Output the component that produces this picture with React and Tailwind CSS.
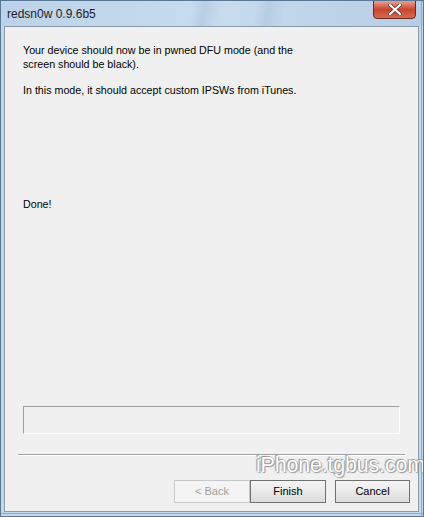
export default function App() {
  return (
    <div
      className="relative w-[424px] h-[517px] overflow-hidden bg-[#c4d8ec] border border-[#5a7896]"
      style={{ fontFamily: '"Liberation Sans", Arial, sans-serif' }}
    >
      {/* title bar */}
      <div className="relative h-[25px] flex items-center pl-[6px] bg-gradient-to-r from-[#bcd2e8] via-[#c9dcee] to-[#b7cde4]">
        <div className="absolute inset-0 bg-[linear-gradient(100deg,transparent_45%,rgba(150,180,210,0.35)_48%,transparent_52%,transparent_60%,rgba(150,180,210,0.3)_63%,transparent_67%)]" />
        <span className="relative text-[12px] text-[#1c1c2c]">redsn0w 0.9.6b5</span>
        <div className="absolute right-[7px] top-[-1px] w-[43px] h-[19px] rounded-b-[4px] border border-[#6a2a20] bg-gradient-to-b from-[#e8a090] via-[#c8452e] to-[#d46a50] flex items-center justify-center">
          <svg width="14" height="11" viewBox="0 0 14 11">
            <path d="M2 1 L12 10 M12 1 L2 10" stroke="#5a2a22" strokeWidth="3.6" strokeLinecap="square" />
            <path d="M2 1 L12 10 M12 1 L2 10" stroke="#ffffff" strokeWidth="2.2" strokeLinecap="square" />
          </svg>
        </div>
      </div>

      {/* client area */}
      <div className="ml-[3px] mr-[4px] h-[486px] border border-[#8a9aab] bg-[#f0f0f0] flex flex-col">
        <div className="pl-[18px] pt-[16px] text-[10.7px] leading-[14px] text-black">
          <p>Your device should now be in pwned DFU mode (and the</p>
          <p>screen should be black).</p>
          <p className="mt-[12px]">In this mode, it should accept custom IPSWs from iTunes.</p>
          <p className="mt-[100px]">Done!</p>
        </div>

        <div className="flex-1" />

        {/* progress box */}
        <div className="mx-[18px] h-[28px] border border-[#a0a0a0] border-r-white border-b-white" />

        {/* separator */}
        <div className="mx-[13px] mt-[20px] h-[2px] border-t border-[#a0a0a0] border-b border-b-white" />

        {/* buttons */}
        <div className="flex justify-end pr-[8px] pt-[24px] pb-[8px] text-[11px]">
          <button className="w-[76px] h-[23px] border border-[#c8c8c8] bg-[#f4f4f4] text-[#a0a0a0]">&lt; Back</button>
          <button className="w-[76px] h-[23px] border border-[#707070] bg-gradient-to-b from-[#f6f6f6] to-[#dcdcdc] text-black">Finish</button>
          <button className="ml-[9px] w-[75px] h-[23px] border border-[#707070] bg-gradient-to-b from-[#f6f6f6] to-[#dcdcdc] text-black">Cancel</button>
        </div>
      </div>

      <div className="absolute left-0 right-0 bottom-[2px] h-[1px] bg-[#4cc8ee]" />
      <div className="absolute top-0 bottom-0 right-[1px] w-[1px] bg-[#4cc8ee]" />

      {/* watermark */}
      <div
        className="absolute left-[255px] top-[451px] text-[21.5px] leading-[27px] tracking-[-0.2px] whitespace-nowrap text-white"
        style={{ textShadow: '0 0 1px #808080, 1px 1px 1px #9a9a9a, -1px -1px 1px #9a9a9a' }}
      >
        iPhone.tgbus.com
      </div>
    </div>
  );
}
